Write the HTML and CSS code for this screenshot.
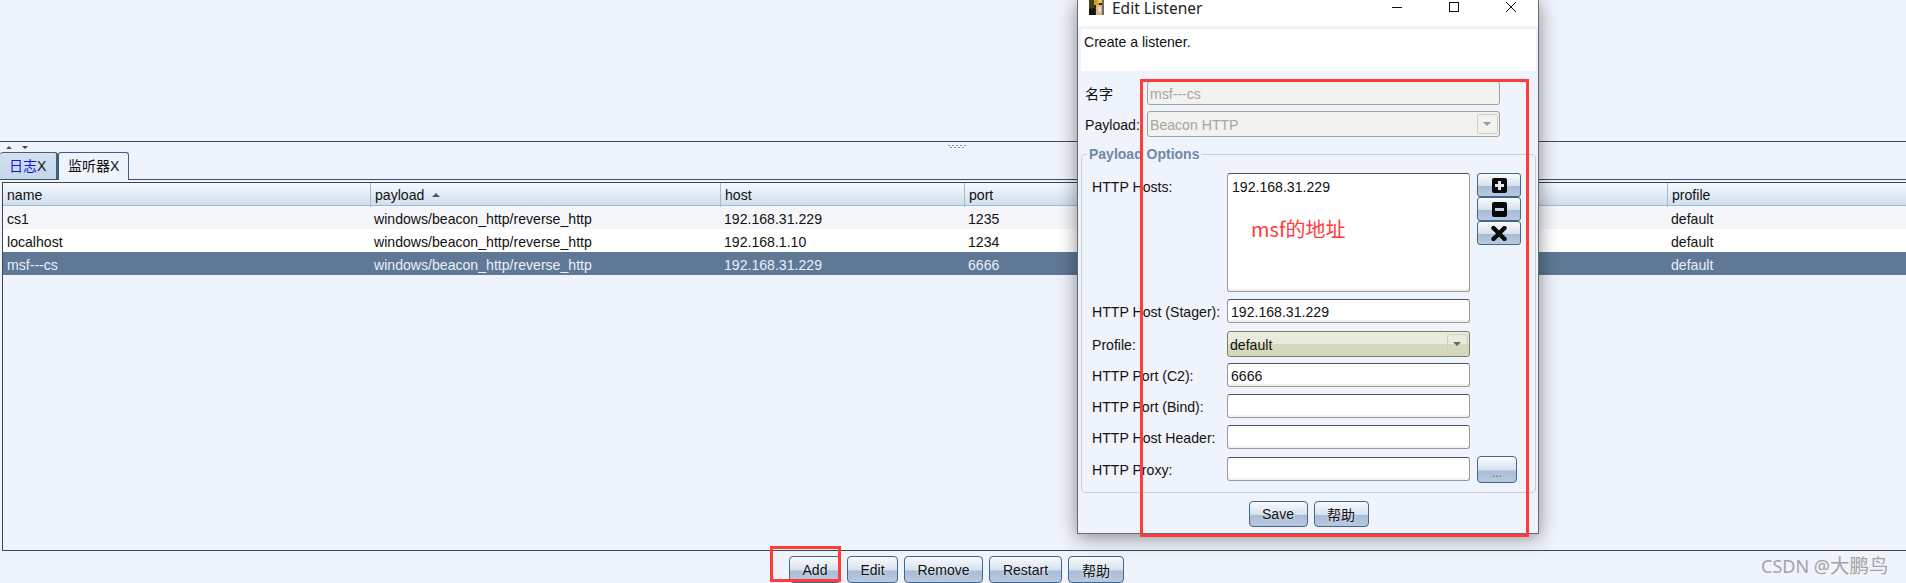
FILE: index.html
```html
<!DOCTYPE html>
<html lang="zh">
<head>
<meta charset="utf-8">
<title>Edit Listener</title>
<link rel="stylesheet" href="styles.css">
</head>
<body>
<div class="app">
  <div class="blank"></div>
  <div class="split-bar">
    <span class="tiny-up"></span>
    <span class="tiny-down"></span>
    <svg class="grip" width="20" height="4" viewBox="0 0 20 4">
      <g fill="#7e97b3">
        <rect x="0" y="0" width="2" height="1"/><rect x="4" y="0" width="2" height="1"/><rect x="8" y="0" width="2" height="1"/><rect x="12" y="0" width="2" height="1"/><rect x="16" y="0" width="2" height="1"/>
        <rect x="2" y="2" width="2" height="1"/><rect x="6" y="2" width="2" height="1"/><rect x="10" y="2" width="2" height="1"/><rect x="14" y="2" width="2" height="1"/>
      </g>
    </svg>
  </div>
  <div class="tabs">
    <div class="tab tab-off"><span class="blue">日志</span>X</div>
    <div class="tab tab-on">监听器X</div>
  </div>
  <div class="frame">
    <div class="grid-row head">
      <div class="cell">name</div>
      <div class="cell">payload<span class="sort"></span></div>
      <div class="cell">host</div>
      <div class="cell">port</div>
      <div class="cell">profile</div>
    </div>
    <div class="grid-row odd">
      <div class="cell">cs1</div>
      <div class="cell">windows/beacon_http/reverse_http</div>
      <div class="cell">192.168.31.229</div>
      <div class="cell">1235</div>
      <div class="cell">default</div>
    </div>
    <div class="grid-row even">
      <div class="cell">localhost</div>
      <div class="cell">windows/beacon_http/reverse_http</div>
      <div class="cell">192.168.1.10</div>
      <div class="cell">1234</div>
      <div class="cell">default</div>
    </div>
    <div class="grid-row selected">
      <div class="cell">msf---cs</div>
      <div class="cell">windows/beacon_http/reverse_http</div>
      <div class="cell">192.168.31.229</div>
      <div class="cell">6666</div>
      <div class="cell">default</div>
    </div>
  </div>
  <div class="actions">
    <button class="btn w-add">Add</button>
    <button class="btn w-edit">Edit</button>
    <button class="btn w-remove">Remove</button>
    <button class="btn w-restart">Restart</button>
    <button class="btn w-help">帮助</button>
  </div>
</div>

<section class="dialog">
  <header class="titlebar">
    <svg class="app-icon" width="15" height="15" viewBox="0 0 15 15">
      <rect width="15" height="15" fill="#2a2418"/>
      <rect x="0" y="0" width="5" height="8" fill="#4a3d1c"/>
      <rect x="5" y="0" width="5" height="5" fill="#c9a227"/>
      <rect x="9" y="0" width="4" height="3" fill="#e8c948"/>
      <rect x="7" y="5" width="6" height="10" fill="#d9b48c"/>
      <rect x="9" y="7" width="3" height="5" fill="#efd6b8"/>
      <rect x="13" y="0" width="2" height="15" fill="#6d6a66"/>
      <rect x="0" y="9" width="6" height="6" fill="#14120e"/>
    </svg>
    <span class="title">Edit Listener</span>
    <div class="win-controls">
      <svg width="10" height="10" viewBox="0 0 10 10"><path d="M0 5.5H10" stroke="#111" fill="none"/></svg>
      <svg width="10" height="10" viewBox="0 0 10 10"><rect x="0.5" y="0.5" width="9" height="9" stroke="#111" fill="none"/></svg>
      <svg width="10" height="10" viewBox="0 0 10 10"><path d="M0 0L10 10M10 0L0 10" stroke="#111" fill="none"/></svg>
    </div>
  </header>
  <div class="dlg-body">
    <div class="intro">Create a listener.</div>
    <div class="top-form">
      <div class="lbl">名字</div>
      <div class="field disabled">msf---cs</div>
      <div class="lbl lbl-tall">Payload:</div>
      <div class="combo disabled">Beacon HTTP<span class="combo-arrow"></span></div>
    </div>
    <fieldset class="options">
      <legend>Payload Options</legend>
      <div class="opt-grid">
        <div class="lbl lbl-hosts">HTTP Hosts:</div>
        <div class="hosts">192.168.31.229</div>
        <div class="host-btns">
          <button class="btn btn-icon"><svg width="15" height="15" viewBox="0 0 15 15"><rect width="15" height="15" rx="2" fill="#0a0a0a"/><path d="M7.5 3V12M3 7.5H12" stroke="#dfe7f1" stroke-width="3" fill="none"/></svg></button>
          <button class="btn btn-icon"><svg width="15" height="15" viewBox="0 0 15 15"><rect width="15" height="15" rx="2" fill="#0a0a0a"/><path d="M3 7.5H12" stroke="#c3d1e2" stroke-width="3" fill="none"/></svg></button>
          <button class="btn btn-icon"><svg width="16" height="15" viewBox="0 0 16 15"><path d="M2.5 2L13.5 13M13.5 2L2.5 13" stroke="#0a0a0a" stroke-width="4.4" stroke-linecap="round" fill="none"/></svg></button>
        </div>
        <div class="lbl">HTTP Host (Stager):</div>
        <div class="field">192.168.31.229</div>
        <div class="spacer"></div>
        <div class="lbl lbl-tall">Profile:</div>
        <div class="combo combo-active">default<span class="combo-arrow"></span></div>
        <div class="spacer"></div>
        <div class="lbl">HTTP Port (C2):</div>
        <div class="field">6666</div>
        <div class="spacer"></div>
        <div class="lbl">HTTP Port (Bind):</div>
        <div class="field"></div>
        <div class="spacer"></div>
        <div class="lbl">HTTP Host Header:</div>
        <div class="field"></div>
        <div class="spacer"></div>
        <div class="lbl">HTTP Proxy:</div>
        <div class="field"></div>
        <button class="btn btn-dots">...</button>
      </div>
    </fieldset>
    <div class="dlg-footer">
      <button class="btn w-save">Save</button>
      <button class="btn w-help2">帮助</button>
    </div>
  </div>
</section>

<div class="mark mark-form"></div>
<div class="mark mark-add"></div>
<div class="note">msf的地址</div>
<div class="watermark">CSDN @<span class="wm-cjk">大鹏鸟</span></div>
</body>
</html>
```

FILE: styles.css
```css
* { box-sizing: border-box; }

html, body {
  margin: 0;
  height: 583px;
  overflow: hidden;
}

body {
  background: #eff3fb;
  color: #111;
  font-family: "Liberation Sans", "Noto Sans CJK SC", sans-serif;
  font-size: 14.1px;
  position: relative;
}

.app {
  display: flex;
  flex-direction: column;
  height: 583px;
}

.blank { height: 141px; flex: none; }

.split-bar {
  flex: none;
  height: 11px;
  border-top: 1px solid #3d4650;
  display: flex;
  align-items: flex-start;
  padding: 3px 0 0 6px;
  gap: 10px;
}

.tiny-up, .tiny-down {
  width: 0;
  height: 0;
  border-left: 3px solid transparent;
  border-right: 3px solid transparent;
  margin-top: 1px;
}
.tiny-up { border-bottom: 3px solid #555; }
.tiny-down { border-top: 3px solid #444; }

.grip { margin-left: 910px; margin-top: 0; }

.tabs {
  flex: none;
  height: 28px;
  display: flex;
  border-bottom: 1px solid #3b5068;
}

.tab {
  height: 28px;
  border: 1px solid #3e5f80;
  border-bottom: 0;
  border-radius: 3px 3px 0 0;
  line-height: 27px;
  font-size: 14px;
}

.tab-off {
  width: 58px;
  padding-left: 9px;
  background: linear-gradient(#d4e1ee, #c4d6e8);
  border-left: 0;
  height: 27px;
  border-right-width: 2px;
}

.tab-on {
  width: 71px;
  padding-left: 9px;
  background: #eff3fb;
  color: #111;
}

.blue { color: #1414e6; }

.frame {
  flex: 1;
  margin: 2px 0 0 2px;
  border: 1px solid #3d4650;
  border-right: 0;
}

.grid-row {
  display: grid;
  grid-template-columns: 367px 350px 244px 703px 1fr;
  height: 23px;
  line-height: 26px;
}

.cell { padding-left: 4px; white-space: nowrap; }

.head {
  background: linear-gradient(#f6f9fd, #d0dfee);
  border-bottom: 1px solid #a2bad4;
  line-height: 24px;
}
.head .cell + .cell {
  border-left: 1px solid #a2bad4;
  padding-left: 4px;
}

.sort {
  display: inline-block;
  width: 0;
  height: 0;
  margin-left: 8px;
  vertical-align: 3px;
  border-left: 4px solid transparent;
  border-right: 4px solid transparent;
  border-bottom: 4px solid #555;
}

.odd { background: #f5f6fa; }
.even { background: #fff; }
.selected { background: #5e7895; color: #eaf0f8; }

.actions {
  flex: none;
  height: 32px;
  padding: 5px 0 0 7px;
  display: flex;
  justify-content: center;
  gap: 6px;
}

.btn {
  margin: 0;
  padding: 0;
  height: 27px;
  border: 1px solid #44668a;
  border-radius: 4px;
  background: linear-gradient(#f9fbfe 0%, #d6e1ed 52%, #a8bdd7 56%, #b8c9de 100%);
  color: #111;
  font: 14px "Liberation Sans", "Noto Sans CJK SC", sans-serif;
  text-shadow: 0 0 3px #f4f7fb;
  display: flex;
  align-items: center;
  justify-content: center;
}

.w-add { width: 52px; }
.w-edit { width: 51px; }
.w-remove { width: 79px; }
.w-restart { width: 73px; }
.w-help { width: 56px; }
.w-save { width: 59px; height: 26px; }
.w-help2 { width: 55px; height: 26px; }

.dialog {
  position: absolute;
  left: 1077px;
  top: 0;
  width: 462px;
  height: 534px;
  background: #eff3fb;
  border: 1px solid #6a6a6a;
  border-top: 0;
  box-shadow: 0 3px 18px rgba(0, 0, 0, 0.45);
}

.titlebar {
  height: 26px;
  background: #fff;
  display: flex;
  align-items: flex-start;
  padding-left: 11px;
}

.app-icon { flex: none; }

.title {
  margin-left: 8px;
  font: 15.5px/16px "Noto Sans", sans-serif;
  color: #222;
}

.win-controls {
  margin-left: auto;
  margin-right: 22px;
  margin-top: 2px;
  display: flex;
  gap: 47px;
}

.dlg-body { padding: 3px 2px 0 3px; }

.intro {
  height: 42px;
  background: #fff;
  padding: 4px 0 0 3px;
  line-height: 18px;
}

.top-form {
  margin-top: 10px;
  padding-left: 4px;
  display: grid;
  grid-template-columns: 62px 353px;
  grid-template-rows: 24px 26px;
  row-gap: 6px;
}

.lbl { line-height: 26px; white-space: nowrap; }
.lbl-tall { line-height: 28px; }
.lbl-hosts { margin-top: 1px; }

.field {
  height: 24px;
  line-height: 24px;
  padding-left: 3px;
  background: #fff;
  border: 1px solid #9a9a9a;
  border-top-color: #4b5560;
  border-radius: 3px;
  box-shadow: inset 0 -2px 0 #f1f1f1;
}

.field.disabled {
  padding-left: 2px;
  background: #f2f2ef;
  color: #a5a5a5;
  border-color: #a2a2a2;
  box-shadow: none;
}

.combo {
  position: relative;
  height: 26px;
  line-height: 26px;
  padding-left: 2px;
  border: 1px solid #a0a0a0;
  border-radius: 3px;
}

.combo.disabled { background: #f2f2ef; color: #a5a5a5; }

.combo-active {
  background: linear-gradient(#e9ebdd 50%, #d5d9bd 50%);
  border-color: #7c7f6b;
}

.combo-arrow {
  position: absolute;
  right: 1px;
  top: 2px;
  width: 21px;
  height: 20px;
  border: 1px solid #cfcfc4;
  border-radius: 2px;
}

.combo-arrow::after {
  content: "";
  position: absolute;
  left: 5px;
  top: 7px;
  border-left: 4px solid transparent;
  border-right: 4px solid transparent;
  border-top: 4px solid #666;
}

.combo.disabled .combo-arrow::after { border-top-color: #999; }

.options {
  margin: 8px 0 0;
  padding: 10px 0 11px 10px;
  min-width: 0;
  border: 1px solid #c4d0e0;
  border-radius: 4px;
}

.options legend {
  margin-left: -5px;
  padding: 0 2px;
  font-weight: bold;
  font-size: 14px;
  line-height: 18px;
  color: #6f89a9;
}

.opt-grid {
  display: grid;
  grid-template-columns: 128px 243px auto;
  grid-template-rows: 126px 32px 32px 31px 31px 32px 24px;
  column-gap: 7px;
  justify-content: start;
  align-items: start;
}

.hosts {
  height: 119px;
  padding: 3px 0 0 4px;
  line-height: 20px;
  background: #fff;
  border: 1px solid #9a9a9a;
  border-top-color: #4b5560;
  border-radius: 3px;
  box-shadow: inset 0 -2px 0 #f1f1f1;
}

.host-btns { display: flex; flex-direction: column; }

.btn-icon { width: 44px; height: 24px; border-radius: 3px; }

.btn-dots {
  width: 40px;
  height: 27px;
  margin-top: -1px;
  font-size: 12px;
  padding-top: 6px;
  color: #555;
}

.dlg-footer {
  margin-top: 8px;
  display: flex;
  justify-content: center;
  gap: 6px;
}

.mark {
  position: absolute;
  border: 3px solid #ff3b3b;
  pointer-events: none;
}

.mark-form { left: 1140px; top: 79px; width: 389px; height: 458px; }
.mark-add { left: 770px; top: 546px; width: 71px; height: 36px; }

.note {
  position: absolute;
  left: 1251px;
  top: 215px;
  color: #ff3b3b;
  font: 20px/28px "Noto Sans CJK SC", sans-serif;
}

.watermark {
  position: absolute;
  left: 1761px;
  top: 553px;
  color: #a3a3a3;
  font: 18px/26px "Noto Sans", "Noto Sans CJK SC", sans-serif;
  white-space: nowrap;
}

.wm-cjk { font-size: 19.5px; }
```
